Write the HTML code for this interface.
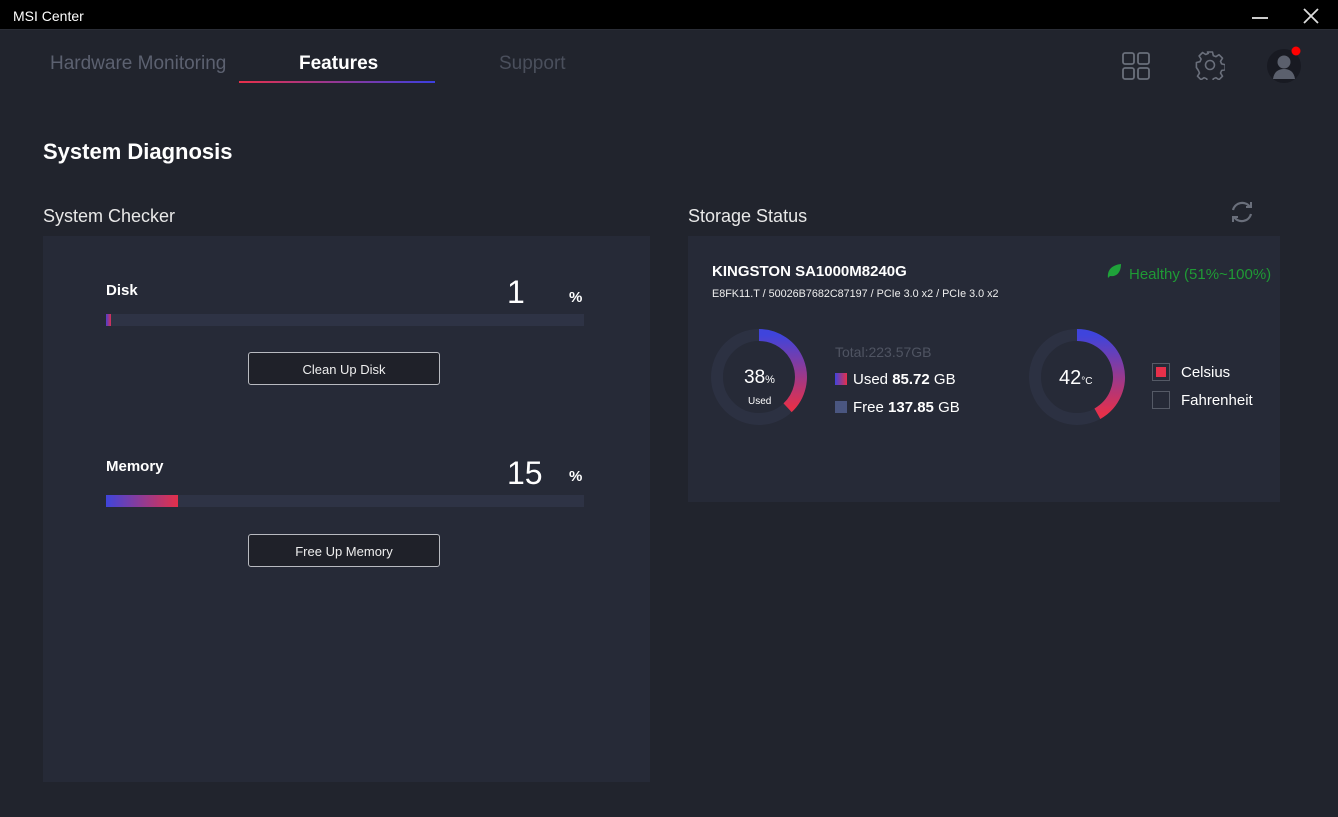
<!DOCTYPE html>
<html><head><meta charset="utf-8"><style>
*{margin:0;padding:0;box-sizing:border-box}
body{width:1338px;height:817px;background:#21242d;font-family:"Liberation Sans",sans-serif;position:relative;overflow:hidden;color:#fff}
.a{position:absolute}
.tb{left:0;top:0;width:1338px;height:30px;background:#000;border-bottom:1px solid #2a2d36}
.panel{background:#262a37}
.track{background:#2e3345;height:12px}
.btn{border:1px solid #b8bac0;border-radius:3px;background:#1f2129;font-size:13px;text-align:center;line-height:31px;color:#eee}
</style></head><body>
<div class="a tb"></div>
<div class="a" style="left:13px;top:8px;font-size:14px;color:#fff">MSI Center</div>
<div class="a" style="left:1252px;top:17px;width:16px;height:2px;background:#ccc"></div>
<svg class="a" style="left:1303px;top:8px" width="16" height="16"><path d="M1 1L15 15M15 1L1 15" stroke="#ddd" stroke-width="1.8"/></svg>

<div class="a" style="left:50px;top:53px;font-size:19px;color:#5c6170">Hardware Monitoring</div>
<div class="a" style="left:299px;top:53px;font-size:19px;font-weight:bold;color:#fff">Features</div>
<div class="a" style="left:499px;top:53px;font-size:19px;color:#4a4f5c">Support</div>
<div class="a" style="left:239px;top:81px;width:196px;height:2px;background:linear-gradient(90deg,#e8304a,#3b3fe0)"></div>

<svg class="a" style="left:1122px;top:52px" width="28" height="28" fill="none" stroke="#6a6f7b" stroke-width="1.8"><rect x="1" y="1" width="11" height="11" rx="2"/><rect x="16" y="1" width="11" height="11" rx="2"/><rect x="1" y="16" width="11" height="11" rx="2"/><rect x="16" y="16" width="11" height="11" rx="2"/></svg>
<svg class="a" style="left:1195px;top:50px" width="30" height="30" viewBox="0 0 30 30" fill="none" stroke="#6a6f7b" stroke-width="1.6"><path d="M12.5 2h5l.8 3.6 2.6 1.1 3.1-2 3.5 3.5-2 3.1 1.1 2.6 3.6.8v5l-3.6.8-1.1 2.6 2 3.1-3.5 3.5-3.1-2-2.6 1.1-.8 3.6h-5l-.8-3.6-2.6-1.1-3.1 2-3.5-3.5 2-3.1-1.1-2.6L1.4 17.5v-5l3.6-.8 1.1-2.6-2-3.1 3.5-3.5 3.1 2 2.6-1.1z" stroke-linejoin="round"/><circle cx="15" cy="15" r="4.5"/></svg>
<svg class="a" style="left:1266px;top:44px" width="40" height="40"><circle cx="18" cy="22" r="17" fill="#181a22"/><circle cx="18" cy="18" r="6.5" fill="#5b606d"/><path d="M7 35c1-7 5-10 11-10s10 3 11 10z" fill="#5b606d"/><circle cx="30" cy="7" r="4.5" fill="#f00"/></svg>

<div class="a" style="left:43px;top:139px;font-size:22px;font-weight:bold">System Diagnosis</div>
<div class="a" style="left:43px;top:206px;font-size:18px;color:#e8e8e8">System Checker</div>
<div class="a" style="left:688px;top:206px;font-size:18px;color:#e8e8e8">Storage Status</div>
<svg class="a" style="left:1228px;top:198px" width="28" height="28" fill="none" stroke="#6a6f7b" stroke-width="2.2"><path d="M5 12a9.5 9.5 0 0 1 17-3"/><path d="M23 16a9.5 9.5 0 0 1-17 3"/><path d="M18 9h5V4" stroke-width="2"/><path d="M10 19H5v5" stroke-width="2"/></svg>

<div class="a panel" style="left:43px;top:236px;width:607px;height:546px"></div>
<div class="a" style="left:106px;top:282px;font-size:15px;font-weight:bold">Disk</div>
<div class="a" style="left:507px;top:274px;font-size:32px">1</div>
<div class="a" style="left:569px;top:289px;font-size:15px;font-weight:bold">%</div>
<div class="a track" style="left:106px;top:314px;width:478px"></div>
<div class="a" style="left:106px;top:314px;width:5px;height:12px;background:linear-gradient(90deg,#4a3fd0,#d83052)"></div>
<div class="a btn" style="left:248px;top:352px;width:192px;height:33px;line-height:33px">Clean Up Disk</div>

<div class="a" style="left:106px;top:458px;font-size:15px;font-weight:bold">Memory</div>
<div class="a" style="left:507px;top:455px;font-size:32px">15</div>
<div class="a" style="left:569px;top:468px;font-size:15px;font-weight:bold">%</div>
<div class="a track" style="left:106px;top:495px;width:478px"></div>
<div class="a" style="left:106px;top:495px;width:72px;height:12px;background:linear-gradient(90deg,#3f45db,#e2304a)"></div>
<div class="a btn" style="left:248px;top:534px;width:192px;height:33px;line-height:33px">Free Up Memory</div>

<div class="a panel" style="left:688px;top:236px;width:592px;height:266px"></div>
<div class="a" style="left:712px;top:263px;font-size:15px;font-weight:bold">KINGSTON SA1000M8240G</div>
<div class="a" style="left:712px;top:288px;font-size:10.8px;color:#eee">E8FK11.T / 50026B7682C87197 / PCIe 3.0 x2 / PCIe 3.0 x2</div>
<svg class="a" style="left:1105px;top:262px" width="18" height="18"><path d="M3 16C2 8 7 3 16 2c0 9-5 13-11 12z" fill="#1fa23a"/></svg>
<div class="a" style="left:1129px;top:266px;font-size:15px;color:#1f9a35">Healthy (51%~100%)</div>

<svg class="a" style="left:0;top:0" width="1338" height="817">
<defs><linearGradient id="g" x1="0" y1="0" x2="0" y2="1"><stop offset="0" stop-color="#3f44dc"/><stop offset="1" stop-color="#e6304a"/></linearGradient></defs>
<circle cx="759" cy="377" r="42" fill="none" stroke="#2c3142" stroke-width="12"/>
<path d="M759 335A42 42 0 0 1 787.6 407.7" fill="none" stroke="url(#g)" stroke-width="12"/>
<circle cx="1077" cy="377" r="42" fill="none" stroke="#2c3142" stroke-width="12"/>
<path d="M1077 335A42 42 0 0 1 1097.4 413.7" fill="none" stroke="url(#g)" stroke-width="12"/>
</svg>
<div class="a" style="left:744px;top:367px;font-size:19px">38<span style="font-size:11px">%</span></div>
<div class="a" style="left:748px;top:396px;font-size:10px">Used</div>
<div class="a" style="left:1059px;top:367px;font-size:20px">42<span style="font-size:10px">°C</span></div>

<div class="a" style="left:835px;top:344px;font-size:14px;color:#4f5462">Total:223.57GB</div>
<div class="a" style="left:835px;top:373px;width:12px;height:12px;background:linear-gradient(90deg,#3f44dc,#e6304a)"></div>
<div class="a" style="left:853px;top:371px;font-size:15px">Used <b>85.72</b> GB</div>
<div class="a" style="left:835px;top:401px;width:12px;height:12px;background:#4a5680"></div>
<div class="a" style="left:853px;top:399px;font-size:15px">Free <b>137.85</b> GB</div>

<div class="a" style="left:1152px;top:363px;width:18px;height:18px;border:1px solid #555a66"></div>
<div class="a" style="left:1156px;top:367px;width:10px;height:10px;background:#e6304a"></div>
<div class="a" style="left:1181px;top:364px;font-size:15px">Celsius</div>
<div class="a" style="left:1152px;top:391px;width:18px;height:18px;border:1px solid #555a66"></div>
<div class="a" style="left:1181px;top:392px;font-size:15px">Fahrenheit</div>
</body></html>
